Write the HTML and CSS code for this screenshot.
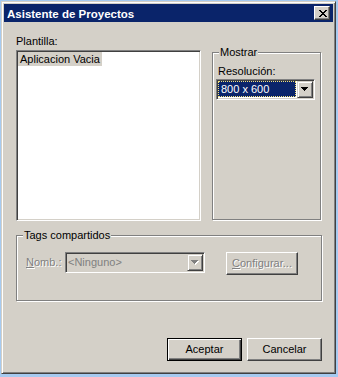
FILE: index.html
```html
<!DOCTYPE html>
<html lang="es">
<head>
<meta charset="utf-8">
<title>Asistente de Proyectos</title>
<link rel="stylesheet" href="styles.css">
</head>
<body>
<div class="window">
  <div class="titlebar">
    <span class="title">Asistente de Proyectos</span>
    <span class="close"><svg width="8" height="7" viewBox="0 0 8 7" shape-rendering="crispEdges"><path fill="#000" d="M0 0h2v1H0zM6 0h2v1H6zM1 1h2v1H1zM5 1h2v1H5zM2 2h4v1H2zM3 3h2v1H3zM2 4h4v1H2zM1 5h2v1H1zM5 5h2v1H5zM0 6h2v1H0zM6 6h2v1H6z"/></svg></span>
  </div>
  <div class="client">
    <div class="top">
      <div class="left">
        <div class="label plantilla">Plantilla:</div>
        <div class="listbox"><span class="item">Aplicacion Vacia</span></div>
      </div>
      <div class="group mostrar">
        <span class="legend">Mostrar</span>
        <div class="label res">Resolución:</div>
        <div class="combo res-combo">
          <div class="combo-text"><span class="sel">800 x 600</span></div>
          <div class="dropbtn"><svg width="7" height="4" viewBox="0 0 7 4" shape-rendering="crispEdges"><path fill="#000" d="M0 0h7v1H0zM1 1h5v1H1zM2 2h3v1H2zM3 3h1v1H3z"/></svg></div>
        </div>
      </div>
    </div>
    <div class="group tags">
      <span class="legend">Tags compartidos</span>
      <div class="tags-row">
        <div class="label nomb disabled"><u>N</u>omb.:</div>
        <div class="combo tag-combo">
          <div class="combo-text dis-text">&lt;Ninguno&gt;</div>
          <div class="dropbtn"><svg width="8" height="5" viewBox="0 0 8 5" shape-rendering="crispEdges"><path fill="#fff" d="M1 1h7v1H1zM2 2h5v1H2zM3 3h3v1H3zM4 4h1v1H4z"/><path fill="#808080" d="M0 0h7v1H0zM1 1h5v1H1zM2 2h3v1H2zM3 3h1v1H3z"/></svg></div>
        </div>
        <div class="btn config disabled"><u>C</u>onfigurar...</div>
      </div>
    </div>
    <div class="buttons">
      <div class="btn default">Aceptar</div>
      <div class="btn">Cancelar</div>
    </div>
  </div>
</div>
</body>
</html>
```

FILE: styles.css
```css
html, body {
  margin: 0;
  padding: 0;
}
body {
  background: #a6caf0;
  font-family: "Liberation Sans", Arial, sans-serif;
  font-size: 11px;
  color: #000;
  padding: 1px 0 0 1px;
}
.window {
  box-sizing: border-box;
  width: 335px;
  height: 373px;
  background: #d4d0c8;
  border: 1px solid;
  border-color: #d4d0c8 #404040 #404040 #d4d0c8;
  box-shadow: inset 1px 1px #fff, inset -1px -1px #808080;
  padding: 2px;
  display: flex;
  flex-direction: column;
}
.titlebar {
  height: 18px;
  background: #0a246a;
  color: #fff;
  display: flex;
  align-items: flex-start;
  justify-content: space-between;
}
.title {
  font-weight: bold;
  font-size: 11.5px;
  line-height: 16px;
  padding: 2px 0 0 3px;
}
.close {
  box-sizing: border-box;
  width: 16px;
  height: 14px;
  margin: 2px 3px 0 0;
  background: #d4d0c8;
  border: 1px solid;
  border-color: #fff #404040 #404040 #fff;
  box-shadow: inset -1px -1px #808080;
  padding: 3px 0 0 4px;
}
.close svg, .dropbtn svg {
  display: block;
}
.client {
  flex: 1;
  display: flex;
  flex-direction: column;
  padding: 13px 11px 10px 12px;
}
.top {
  display: flex;
  gap: 11px;
}
.left {
  width: 185px;
}
.label {
  line-height: 13px;
  white-space: nowrap;
}
.plantilla {
  margin-bottom: 2px;
}
.listbox {
  box-sizing: border-box;
  height: 171px;
  background: #fff;
  border: 1px solid;
  border-color: #808080 #fff #fff #808080;
  box-shadow: inset 1px 1px #404040, inset -1px -1px #d4d0c8;
  padding: 1px;
}
.item {
  display: inline-block;
  background: #d4d0c8;
  line-height: 14px;
  padding: 0 2px;
  white-space: nowrap;
}
.group {
  position: relative;
  box-sizing: border-box;
  border: 1px solid #808080;
  box-shadow: inset 1px 1px #fff, 1px 1px #fff;
}
.legend {
  position: absolute;
  top: -7px;
  left: 6px;
  padding: 0 1px;
  background: #d4d0c8;
  line-height: 13px;
  white-space: nowrap;
}
.mostrar {
  width: 109px;
  height: 168px;
  margin-top: 17px;
  padding: 12px 0 0 3px;
}
.res {
  margin: 0 0 1px 2px;
}
.combo {
  box-sizing: border-box;
  height: 21px;
  border: 1px solid;
  border-color: #808080 #fff #fff #808080;
  box-shadow: inset 1px 1px #404040, inset -1px -1px #d4d0c8;
  padding: 1px;
  display: flex;
  align-items: flex-start;
}
.res-combo {
  width: 99px;
  background: #fff;
}
.combo-text {
  flex: 1;
  min-width: 0;
  overflow: hidden;
  white-space: nowrap;
}
.sel {
  display: block;
  box-sizing: border-box;
  width: 78px;
  height: 16px;
  background: #0a246a;
  color: #fff;
  border: 1px dotted #f4e27a;
  line-height: 14px;
  padding-left: 2px;
}
.dropbtn {
  box-sizing: border-box;
  width: 16px;
  height: 17px;
  background: #d4d0c8;
  border: 1px solid;
  border-color: #d4d0c8 #404040 #404040 #d4d0c8;
  box-shadow: inset 1px 1px #fff, inset -1px -1px #808080;
  padding: 5px 0 0 3px;
}
.tags {
  width: 306px;
  height: 66px;
  margin-top: 14px;
  padding: 16px 0 0 9px;
}
.tags-row {
  display: flex;
  align-items: flex-start;
}
.nomb {
  width: 39px;
  margin-top: 4px;
}
.disabled {
  color: #808080;
  text-shadow: 1px 1px 0 #fff;
}
.tag-combo {
  width: 140px;
  background: #d4d0c8;
}
.dis-text {
  color: #808080;
  line-height: 17px;
  padding-left: 1px;
}
.btn {
  box-sizing: border-box;
  width: 75px;
  height: 23px;
  border: 1px solid;
  border-color: #fff #404040 #404040 #fff;
  box-shadow: inset -1px -1px #808080;
  display: flex;
  align-items: center;
  justify-content: center;
  line-height: 13px;
  white-space: nowrap;
}
.btn.default {
  border-color: #000;
  box-shadow: inset 1px 1px #fff, inset -1px -1px #404040, inset -2px -2px #808080;
}
.config {
  width: 72px;
  margin-left: 21px;
}
.buttons {
  margin-top: auto;
  display: flex;
  justify-content: flex-end;
  gap: 5px;
}
```
